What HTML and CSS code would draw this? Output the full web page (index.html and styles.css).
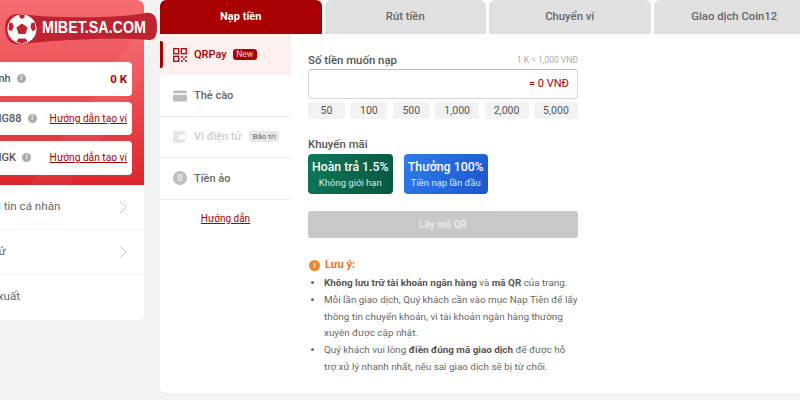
FILE: index.html
```html
<!DOCTYPE html>
<html lang="vi">
<head>
<meta charset="utf-8">
<title>Nạp tiền</title>
<link rel="stylesheet" href="styles.css">
</head>
<body>
<div class="page">
  <aside class="side">
    <div class="hero">
      <span class="hero-name">Tài khoản Thu</span>
      <div class="wallet"><span class="w-name">Ví chính <i class="info">i</i></span><b class="w-amt">0 K</b></div>
      <div class="wallet"><span class="w-name">Ví KING88 <i class="info">i</i></span><a class="w-link">Hướng dẫn tạo ví</a></div>
      <div class="wallet"><span class="w-name">Ví KINGK <i class="info">i</i></span><a class="w-link">Hướng dẫn tạo ví</a></div>
    </div>
    <div class="s-row"><span>Thông tin cá nhân</span><svg class="chev" viewBox="0 0 8 14"><path d="M1 1l6 6-6 6"/></svg></div>
    <div class="s-row"><span>Lịch sử</span><svg class="chev" viewBox="0 0 8 14"><path d="M1 1l6 6-6 6"/></svg></div>
    <div class="s-row s-last"><span>Đăng xuất</span></div>
  </aside>
  <main class="panel">
    <nav class="tabs">
      <div class="tab tab-on">Nạp tiền</div>
      <div class="tab">Rút tiền</div>
      <div class="tab">Chuyển ví</div>
      <div class="tab">Giao dịch Coin12</div>
    </nav>
    <div class="body">
      <div class="methods">
        <div class="m m-on">
          <svg class="m-ic" viewBox="0 0 14 14"><g fill="none" stroke="#a80000" stroke-width="1.300"><rect x=".7" y=".7" width="5" height="5"/><rect x="8.300" y=".7" width="5" height="5"/><rect x=".7" y="8.300" width="5" height="5"/></g><g fill="#a80000" opacity=".7"><rect x="8" y="8" width="2" height="2"/><rect x="12" y="8" width="2" height="2"/><rect x="10" y="10" width="2" height="2"/><rect x="8" y="12" width="2" height="2"/><rect x="12" y="12" width="2" height="2"/></g></svg>
          <span class="m-t">QRPay</span><span class="b-new">New</span>
        </div>
        <div class="m">
          <svg class="m-ic" viewBox="0 0 14 14"><rect y="1.500" width="14" height="11" rx="1.500" fill="#bdbdbd"/><rect y="4" width="14" height="2" fill="#eee"/></svg>
          <span class="m-t">Thẻ cào</span>
        </div>
        <div class="m m-off">
          <svg class="m-ic" viewBox="0 0 14 14"><rect y="1" width="12" height="12" fill="#e6e6e6"/><rect x="5" y="4" width="8" height="6" rx="1" fill="#fff" stroke="#e0e0e0"/></svg>
          <span class="m-t">Ví điện tử</span><span class="b-off">Bảo trì</span>
        </div>
        <div class="m">
          <svg class="m-ic" viewBox="0 0 14 14"><circle cx="7" cy="7" r="7" fill="#bdbdbd"/><text x="7" y="10.200" class="btc">B</text></svg>
          <span class="m-t">Tiền ảo</span>
        </div>
        <a class="guide">Hướng dẫn</a>
      </div>
      <div class="form">
        <div class="f-head"><span class="f-label">Số tiền muốn nạp</span><span class="f-hint">1 K = 1,000 VNĐ</span></div>
        <div class="f-input">= 0 VNĐ</div>
        <div class="chips"><span class="chip c1">50</span><span class="chip c1">100</span><span class="chip c1">500</span><span class="chip c2">1,000</span><span class="chip c2">2,000</span><span class="chip c2">5,000</span></div>
        <div class="f-label promo-label">Khuyến mãi</div>
        <div class="promos">
          <div class="promo green"><b>Hoàn trả 1.5%</b><span>Không giới hạn</span></div>
          <div class="promo blue"><b>Thưởng 100%</b><span>Tiền nạp lần đầu</span></div>
        </div>
        <div class="qr-btn">Lấy mã QR</div>
        <div class="note-h"><i class="warn">!</i>Lưu ý:</div>
        <ul class="notes">
          <li><b>Không lưu trữ tài khoản ngân hàng</b> và <b>mã QR</b> của trang.</li>
          <li>Mỗi lần giao dịch, Quý khách cần vào mục Nạp Tiền để lấy thông tin chuyển khoản, vì tài khoản ngân hàng thường xuyên được cập nhật.</li>
          <li>Quý khách vui lòng <b>điền đúng mã giao dịch</b> để được hỗ trợ xử lý nhanh nhất, nếu sai giao dịch sẽ bị từ chối.</li>
        </ul>
      </div>
    </div>
  </main>
</div>
<div class="logo">
  <svg class="logo-bg" viewBox="0 0 158 34"><path d="M20 3C50 7 112 8 146 2c8-1 11 4 11 13s-1 13-7 14c-36-3-96 0-128 4C10 35 5 27 5 17 5 8 10 2 20 3z" fill="#bd2330"/></svg>
  <svg class="logo-ball" viewBox="0 0 32 32"><circle cx="16" cy="16" r="15.500" fill="#fff"/><g fill="#bd2330"><path d="M16 10l6 4.300-2.300 7h-7.400l-2.300-7z"/><path d="M13 .8h6l-.5 3-2.500 1.500-2.500-1.500z"/><path d="M2.500 9l3.500.5 1 4-2 5-3.500-2z"/><path d="M29.500 9l-3.500.5-1 4 2 5 3.500-2z"/><path d="M10 29.500l2-3.500h8l2 3.500-6 1.700z"/></g></svg>
  <span class="logo-t">MIBET.SA.COM</span>
</div>
</body>
</html>
```

FILE: styles.css
```css
* { box-sizing: border-box; }
html, body { margin: 0; height: 400px; overflow: hidden; }
body { background: #f2f2f2; font-family: Roboto, "Liberation Sans", sans-serif; color: #555; position: relative; }
a { color: #a80000; text-decoration: underline; }
i { font-style: normal; }

.page { display: flex; gap: 16px; width: 1000px; margin-left: -106px; height: 393px; align-items: flex-start; }

.side { width: 250px; height: 320px; background: #fff; border-radius: 0 6px 6px 0; overflow: hidden; flex: none; }
.hero { position: relative; height: 185px; padding: 62px 12px 0 0; border-radius: 0 6px 0 0; display: flex; flex-direction: column; gap: 6px; align-items: stretch;
  background: linear-gradient(125deg, transparent 70%, rgba(255,255,255,.05) 70%, rgba(255,255,255,.05) 80%, transparent 80%), linear-gradient(180deg, #f56d72 0%, #ea4a50 55%, #d9262c 100%); }
.hero-name { position: absolute; right: 146px; top: 25px; font-size: 11px; line-height: 14px; color: #fbd5d7; white-space: nowrap; }
.wallet { height: 33.500px; background: #fff; border-radius: 4px; display: flex; justify-content: space-between; align-items: center; padding: 0 5px 0 77px; font-size: 11px; font-weight: 500; color: #555; }
.w-name { display: flex; align-items: center; gap: 6px; white-space: nowrap; }
.info { width: 9px; height: 9px; border-radius: 50%; background: #aaa; color: #fff; font-size: 7px; line-height: 9px; text-align: center; display: inline-block; }
.w-amt { color: #a80000; font-size: 11.500px; font-weight: 700; }
.w-link { font-size: 10.200px; font-weight: 400; white-space: nowrap; }

.s-row { height: 45px; display: flex; justify-content: space-between; align-items: center; padding: 0 17px 3px 74px; font-size: 11.600px; color: #666; border-bottom: 1px solid #f5f5f5; }
.s-last { border-bottom: 0; }
.chev { width: 8px; height: 14px; fill: none; stroke: #c4c4c4; stroke-width: 1; margin-top: 2px; }

.panel { width: 760px; height: 393px; background: #fff; border-radius: 0 0 0 6px; flex: none; }
.tabs { display: flex; gap: 3px; height: 34px; }
.tab { width: 161.500px; background: #e0e0e0; border-radius: 6px 6px 0 0; text-align: center; line-height: 34px; font-size: 11.300px; color: #666; font-weight: 500; }
.tab-on { background: #a80000; color: #fff; font-weight: 700; font-size: 11px; }

.body { display: flex; }
.methods { width: 131px; flex: none; display: flex; flex-direction: column; }
.m { height: 41.400px; display: flex; align-items: center; padding-left: 13px; border-bottom: 1px solid #eee; position: relative; }
.m-on { background: #fff0f0; border-bottom: 0; }
.m-on::before { content: ""; position: absolute; left: 0; top: 7px; width: 3px; height: 27px; background: #a80000; border-radius: 0 2px 2px 0; }
.m-ic { width: 14px; height: 14px; margin-right: 7px; flex: none; }
.m-t { font-size: 11px; font-weight: 500; color: #666; }
.m-on .m-t { color: #a80000; }
.m-off .m-t { color: #ccc; }
.b-new { background: #a80000; color: #f8d0d0; font-size: 8.500px; border-radius: 3px; padding: 0 3.500px; margin-left: 6px; line-height: 11px; }
.b-off { background: #e8e8e8; color: #666; font-size: 8px; border-radius: 3px; padding: 0 3px; margin-left: 8px; line-height: 11px; }
.btc { font-size: 9px; font-weight: 700; fill: #e8e8e8; text-anchor: middle; font-family: Roboto, sans-serif; }
.guide { font-size: 10px; text-align: center; margin-top: 13px; }

.form { width: 270px; margin-left: 17px; padding-top: 18px; flex: none; }
.f-head { display: flex; justify-content: space-between; align-items: center; height: 15px; }
.f-label { font-size: 11.400px; font-weight: 500; color: #555; }
.f-hint { font-size: 8.500px; color: #aaa; }
.f-input { height: 30px; margin-top: 2px; border: 1px solid #d4d4d4; border-top-color: #bbb; border-radius: 4px; text-align: right; line-height: 28px; padding-right: 8px; font-size: 11px; color: #a80000; }
.chips { display: flex; justify-content: space-between; margin-top: 3px; }
.chip { height: 17px; background: #f2f2f2; border-radius: 3px; text-align: center; font-size: 10.500px; line-height: 17px; color: #555; }
.c1 { width: 37px; }
.c2 { width: 44px; }
.promo-label { margin-top: 18px; line-height: 15px; }
.promos { display: flex; gap: 11px; margin-top: 2px; }
.promo { width: 84.500px; height: 40px; border-radius: 4px; color: #fff; display: flex; flex-direction: column; align-items: center; justify-content: center; white-space: nowrap; }
.promo b { font-size: 12.300px; font-weight: 500; line-height: 17px; }
.promo span { font-size: 9.500px; line-height: 13px; opacity: .85; }
.green { background: linear-gradient(120deg, #0d7a5c, #07553f); }
.blue { background: linear-gradient(120deg, #2f7dea, #1d55cf); }
.qr-btn { height: 27px; margin-top: 17px; background: #c8c8c8; border-radius: 3px; text-align: center; line-height: 27px; font-size: 10px; font-weight: 700; color: #e8e8e8; }
.note-h { margin-top: 20px; display: flex; align-items: center; gap: 5px; font-size: 11px; font-weight: 700; color: #e8742a; line-height: 14px; padding-left: 1px; }
.warn { width: 11px; height: 11px; border-radius: 50%; background: #f28530; color: #fff; font-size: 8px; line-height: 11px; text-align: center; }
.notes { margin: 3px 0 0; padding: 0 0 0 16px; font-size: 9.900px; line-height: 16.800px; color: #666; }
.notes b { font-weight: 700; color: #555; }

.logo { position: absolute; left: 0; top: 11px; width: 158px; height: 34px; }
.logo-bg { position: absolute; inset: 0; width: 158px; height: 34px; }
.logo-ball { position: absolute; left: 7px; top: 3px; width: 30px; height: 30px; }
.logo-t { position: absolute; left: 42px; top: 8px; color: #fff; font-family: "Liberation Sans", sans-serif; font-weight: 700; font-size: 17px; line-height: 18px; white-space: nowrap; transform: scaleX(.84); transform-origin: left center; }
```
